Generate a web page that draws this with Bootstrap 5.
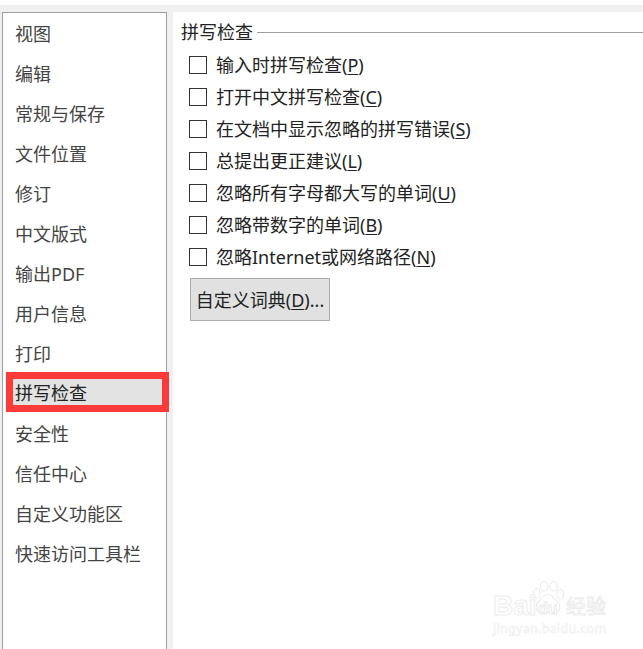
<!DOCTYPE html>
<html lang="zh-CN">
<head>
<meta charset="utf-8">
<title>拼写检查</title>
<link href="https://cdn.jsdelivr.net/npm/bootstrap@5.3.0/dist/css/bootstrap.min.css" rel="stylesheet">
<style>
html,body{height:100%}
body{background:#f0f0f0;font-family:"Noto Sans","Noto Sans CJK SC",sans-serif;font-size:18px;overflow:hidden;border-top:5px solid #fff}
.shell{height:644px;padding:7px 0 0 2px;gap:6px}
.side{width:165px;flex:none;background:#fff;border:1px solid #a0a0a0;border-bottom:0;padding-top:1px}
.side-item{height:40px;line-height:40px;padding-left:12px;color:#444;white-space:nowrap}
.side-item.sel{height:40px;margin:-2px 0 2px 3px;width:163px;padding-left:2px;background:#e3e3e3;border:7px solid #fb3a3a;line-height:28px;color:#222;position:relative}
.pane{flex:1;background:#fff;padding:7px 0 0 8px;color:#222;min-width:0}
.head{height:26px;line-height:26px;gap:4px;margin-bottom:4px}
.head i{flex:1;height:1px;background:#a0a0a0}
.opt{height:32px;padding-left:8px;gap:9px;margin:0}
.opt-box{appearance:none;flex:none;width:18px;height:18px;border:1px solid #333;background:#fff;margin:0}
.opt-label{line-height:32px;white-space:nowrap}
.u{text-decoration:underline;text-underline-offset:2px}
.dict{margin:5px 0 0 9px;width:140px;height:43px;padding:0;border:1px solid #adadad;border-radius:0;background:#e1e1e1;color:#222;font-size:18px;line-height:40px}
.dict:hover{background:#e1e1e1;color:#222;border-color:#adadad}
.mark-wm{position:absolute;left:490px;top:578px;width:153px;height:60px;pointer-events:none;color:#fff;-webkit-text-stroke:1px #ededed}
.wm-a{position:absolute;left:3px;top:13px;font-family:"Liberation Sans",sans-serif;font-size:28px;font-weight:700;line-height:30px}
.wm-du{position:absolute;left:48px;top:22px;font-family:"Liberation Sans",sans-serif;font-size:16px;font-weight:700;line-height:18px;-webkit-text-stroke:.8px #e8e8e8}
.wm-b{position:absolute;left:76px;top:15px;font-size:20px;line-height:28px}
.wm-c{position:absolute;left:3px;top:44px;font-size:12.5px;line-height:13px;white-space:nowrap;letter-spacing:.3px;-webkit-text-stroke:.5px #ececec}
.wm-p{position:absolute;left:42px;top:2px}
</style>
</head>
<body>
<div class="shell d-flex">
  <nav class="side">
    <div class="side-item">视图</div>
    <div class="side-item">编辑</div>
    <div class="side-item">常规与保存</div>
    <div class="side-item">文件位置</div>
    <div class="side-item">修订</div>
    <div class="side-item">中文版式</div>
    <div class="side-item">输出PDF</div>
    <div class="side-item">用户信息</div>
    <div class="side-item">打印</div>
    <div class="side-item sel">拼写检查</div>
    <div class="side-item">安全性</div>
    <div class="side-item">信任中心</div>
    <div class="side-item">自定义功能区</div>
    <div class="side-item">快速访问工具栏</div>
  </nav>
  <main class="pane">
    <div class="head d-flex align-items-center"><span>拼写检查</span><i></i></div>
    <label class="opt d-flex align-items-center"><input class="opt-box" type="checkbox"><span class="opt-label">输入时拼写检查(<span class="u">P</span>)</span></label>
    <label class="opt d-flex align-items-center"><input class="opt-box" type="checkbox"><span class="opt-label">打开中文拼写检查(<span class="u">C</span>)</span></label>
    <label class="opt d-flex align-items-center"><input class="opt-box" type="checkbox"><span class="opt-label">在文档中显示忽略的拼写错误(<span class="u">S</span>)</span></label>
    <label class="opt d-flex align-items-center"><input class="opt-box" type="checkbox"><span class="opt-label">总提出更正建议(<span class="u">L</span>)</span></label>
    <label class="opt d-flex align-items-center"><input class="opt-box" type="checkbox"><span class="opt-label">忽略所有字母都大写的单词(<span class="u">U</span>)</span></label>
    <label class="opt d-flex align-items-center"><input class="opt-box" type="checkbox"><span class="opt-label">忽略带数字的单词(<span class="u">B</span>)</span></label>
    <label class="opt d-flex align-items-center"><input class="opt-box" type="checkbox"><span class="opt-label">忽略Internet或网络路径(<span class="u">N</span>)</span></label>
    <button type="button" class="btn dict">自定义词典(<span class="u">D</span>)...</button>
  </main>
</div>
<div class="mark-wm">
  <svg class="wm-p" width="32" height="36" viewBox="0 0 34 36" fill="#fff" stroke="#ebebeb" stroke-width="1.2">
    <ellipse cx="5" cy="13" rx="3.6" ry="5"/><ellipse cx="13" cy="5.5" rx="4" ry="5"/><ellipse cx="23" cy="5.5" rx="4" ry="5"/><ellipse cx="30" cy="14" rx="3.6" ry="5"/>
    <path d="M17 14c-5 0-6 5-10 8-4 3-3 12 3 12 3 0 4-1 7-1s4 1 7 1c6 0 7-9 3-12-4-3-5-8-10-8z"/>
  </svg>
  <span class="wm-a">Bai</span>
  <span class="wm-du">du</span>
  <span class="wm-b">经验</span>
  <span class="wm-c">jingyan.baidu.com</span>
</div>
</body>
</html>
